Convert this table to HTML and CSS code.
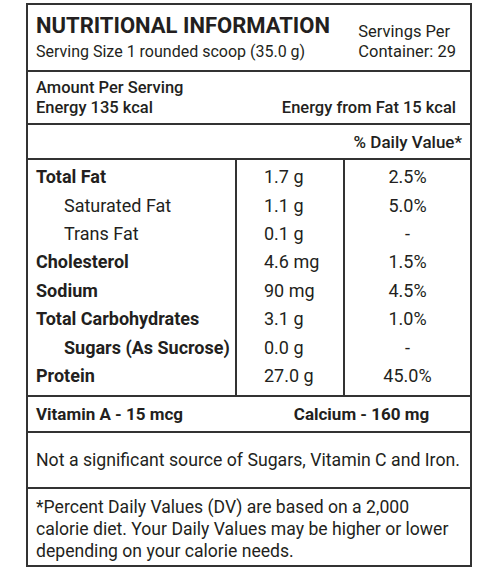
FILE: index.html
```html
<!DOCTYPE html>
<html lang="en">
<head>
    <meta charset="UTF-8">
    <meta name="viewport" content="width=device-width, initial-scale=1.0">
    <title>Nutritional Information</title>
    <link rel="stylesheet" href="styles.css">
</head>
<body>

<div class="label">

    <div class="head">
        <div>
            <h1>NUTRITIONAL INFORMATION</h1>
            <p class="serving">Serving Size 1 rounded scoop (35.0 g)</p>
        </div>
        <p class="per-container">Servings Per<br>Container: 29</p>
    </div>

    <div class="amount">
        <p>Amount Per Serving</p>
        <div class="energy">
            <span>Energy 135 kcal</span>
            <span>Energy from Fat 15 kcal</span>
        </div>
    </div>

    <div class="dv-head">% Daily Value*</div>

    <table class="nutrients">
        <colgroup>
            <col class="c-name">
            <col class="c-qty">
            <col>
        </colgroup>
        <tr class="first">
            <td class="bold">Total Fat</td>
            <td>1.7 g</td>
            <td class="pct">2.5%</td>
        </tr>
        <tr>
            <td class="sub">Saturated Fat</td>
            <td>1.1 g</td>
            <td class="pct">5.0%</td>
        </tr>
        <tr>
            <td class="sub">Trans Fat</td>
            <td>0.1 g</td>
            <td class="pct">-</td>
        </tr>
        <tr>
            <td class="bold">Cholesterol</td>
            <td>4.6 mg</td>
            <td class="pct">1.5%</td>
        </tr>
        <tr>
            <td class="bold">Sodium</td>
            <td>90 mg</td>
            <td class="pct">4.5%</td>
        </tr>
        <tr>
            <td class="bold">Total Carbohydrates</td>
            <td>3.1 g</td>
            <td class="pct">1.0%</td>
        </tr>
        <tr>
            <td class="sub bold">Sugars (As Sucrose)</td>
            <td>0.0 g</td>
            <td class="pct">-</td>
        </tr>
        <tr class="last">
            <td class="bold">Protein</td>
            <td>27.0 g</td>
            <td class="pct">45.0%</td>
        </tr>
    </table>

    <div class="vitamins">
        <span class="vit-a">Vitamin A - 15 mcg</span>
        <span class="calcium">Calcium - 160 mg</span>
    </div>

    <p class="note">Not a significant source of Sugars, Vitamin C and Iron.</p>

    <p class="footnote">*Percent Daily Values (DV) are based on a 2,000 calorie diet. Your Daily Values may be higher or lower depending on your calorie needs.</p>

</div>

</body>
</html>
```

FILE: styles.css
```css
body {
    margin: 0;
    padding: 3px 0 0 26px;
    background: #fff;
    color: #231f20;
    font-family: Roboto, "Liberation Sans", sans-serif;
}

p {
    margin: 0;
}

.label {
    width: 442px;
    border: 2px solid #333;
    border-bottom: 0;
}

.head {
    display: flex;
    justify-content: space-between;
    padding: 7px 14px 0 8px;
    height: 58px;
    border-bottom: 2px solid #333;
}

.head h1 {
    margin: 0;
    font-size: 22px;
    line-height: 28px;
    font-weight: 700;
}

.serving {
    margin-top: 1px;
    font-size: 16px;
    line-height: 22px;
}

.per-container {
    font-size: 16.5px;
    line-height: 20px;
    padding-top: 10px;
}

.amount {
    padding: 6px 14px 0 8px;
    height: 45px;
    border-bottom: 2px solid #333;
    font-size: 16.5px;
    font-weight: 500;
    line-height: 20px;
}

.energy {
    display: flex;
    justify-content: space-between;
}

.dv-head {
    height: 33px;
    line-height: 34px;
    padding-right: 8px;
    text-align: right;
    font-size: 17px;
    font-weight: 500;
    border-bottom: 2px solid #333;
}

.nutrients {
    width: 100%;
    table-layout: fixed;
    border-collapse: collapse;
    font-size: 18px;
}

.c-name {
    width: 208px;
}

.c-qty {
    width: 108px;
}

.nutrients td {
    height: 28.4px;
    padding: 0 0 0 8px;
    line-height: 20px;
    white-space: nowrap;
}

.nutrients td:nth-child(2) {
    padding-left: 27px;
    border-left: 2px solid #333;
    border-right: 2px solid #333;
}

.nutrients .first td {
    padding-top: 3px;
}

.nutrients .last td {
    padding-bottom: 5px;
}

.nutrients td.pct {
    padding-left: 0;
    text-align: center;
}

.bold {
    font-weight: 700;
}

.nutrients td.sub {
    padding-left: 36px;
}

.vitamins {
    display: flex;
    height: 34px;
    align-items: center;
    border-top: 2px solid #333;
    border-bottom: 2px solid #333;
    font-size: 17px;
    font-weight: 700;
}

.vitamins span {
    flex: 1;
}

.vit-a {
    padding-left: 8px;
}

.calcium {
    text-align: center;
}

.note {
    height: 54px;
    line-height: 54px;
    padding-left: 8px;
    font-size: 17.7px;
    border-bottom: 2px solid #333;
}

.footnote {
    padding: 7px 12px 0 8px;
    height: 69px;
    font-size: 17.6px;
    line-height: 22px;
    border-bottom: 2px solid #333;
}
```
